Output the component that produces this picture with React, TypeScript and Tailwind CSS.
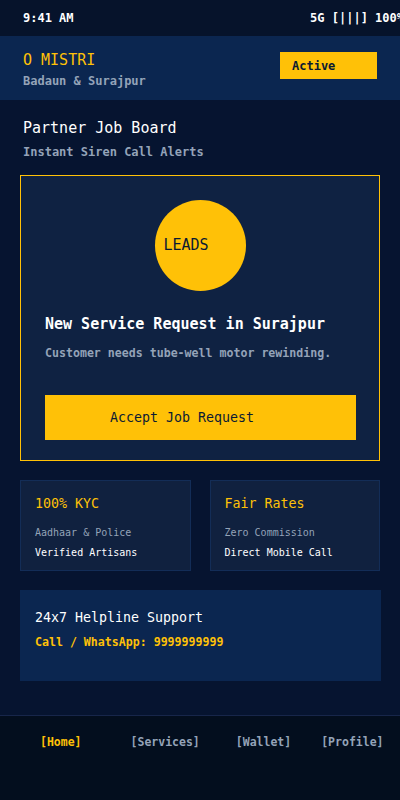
import React from 'react';

const mono = { fontFamily: '"DejaVu Sans Mono", "Liberation Mono", monospace' };

const StatCard: React.FC<{ title: string; line1: string; line2: string }> = ({ title, line1, line2 }) => (
  <div className="flex-1 h-[91px] bg-[#10213f] border border-[#132d57] px-[14px] pt-[13px]">
    <div className="text-[13.3px] leading-[20px] text-[#ffc107]">{title}</div>
    <div className="mt-[12px] text-[10px] leading-[14px] text-[#94a3b8]">{line1}</div>
    <div className="mt-[6px] text-[10px] leading-[14px] text-white">{line2}</div>
  </div>
);

export default function App() {
  return (
    <div style={mono} className="w-[400px] h-[800px] overflow-hidden bg-[#061430] flex flex-col">
      {/* Status bar */}
      <div className="h-9 shrink-0 bg-[#06132b] flex items-center justify-between pl-[23px] -mr-[4px] text-[12px] font-bold text-white">
        <span>9:41 AM</span>
        <span>5G [|||] 100%</span>
      </div>

      {/* Header */}
      <div className="h-16 shrink-0 bg-[#0b2650] flex items-start justify-between px-[23px] pt-[14px]">
        <div>
          <div className="text-[15px] leading-[20px] text-[#ffc107]">O MISTRI</div>
          <div className="mt-[3px] text-[12px] leading-[16px] font-bold text-[#94a3b8]">Badaun &amp; Surajpur</div>
        </div>
        <div className="mt-[2px] w-[97px] h-[27px] bg-[#ffc107] flex items-center pl-[12px] text-[12px] font-bold text-[#0a1a33]">
          Active
        </div>
      </div>

      {/* Title */}
      <div className="px-[23px] pt-[18px]">
        <div className="text-[15px] leading-[20px] text-white">Partner Job Board</div>
        <div className="mt-[6px] text-[12px] leading-[16px] font-bold text-[#94a3b8]">Instant Siren Call Alerts</div>
      </div>

      {/* Lead card */}
      <div className="mx-[20px] mt-[15px] h-[286px] border border-[#ffc107] bg-[#0f2242] flex flex-col px-[24px] pt-[24px]">
        <div className="self-center w-[91px] h-[91px] rounded-full bg-[#ffc107] flex items-center pl-[9px] text-[15px] text-[#0a1a33]">
          LEADS
        </div>
        <div className="mt-[23px] text-[15px] leading-[20px] font-bold text-white">New Service Request in Surajpur</div>
        <div className="mt-[11px] text-[11.6px] leading-[16px] font-bold text-[#94a3b8]">Customer needs tube-well motor rewinding.</div>
        <button className="mt-[34px] h-[45px] w-[311px] bg-[#ffc107] flex items-center pl-[65px] text-[13.3px] text-[#0a1a33]">
          Accept Job Request
        </button>
      </div>

      {/* Stats */}
      <div className="mx-[20px] mt-[19px] flex gap-[19px]">
        <StatCard title="100% KYC" line1="Aadhaar & Police" line2="Verified Artisans" />
        <StatCard title="Fair Rates" line1="Zero Commission" line2="Direct Mobile Call" />
      </div>

      {/* Helpline */}
      <div className="mx-[20px] mt-[19px] w-[361px] h-[91px] bg-[#0b2650] px-[15px] pt-[18px]">
        <div className="text-[13.3px] leading-[20px] text-white">24x7 Helpline Support</div>
        <div className="mt-[6px] text-[11.6px] leading-[16px] font-bold text-[#ffc107]">Call / WhatsApp: 9999999999</div>
      </div>

      {/* Bottom nav */}
      <div className="mt-[34px] flex-1 bg-[#030e1e] border-t border-[#17264a] flex items-start pt-[18px] pl-[40px] text-[11.5px] leading-[16px] font-bold text-[#94a3b8]">
        <span className="text-[#ffc107]">[Home]</span>
        <span className="ml-[49px]">[Services]</span>
        <span className="ml-[36px]">[Wallet]</span>
        <span className="ml-[30px]">[Profile]</span>
      </div>
    </div>
  );
}
